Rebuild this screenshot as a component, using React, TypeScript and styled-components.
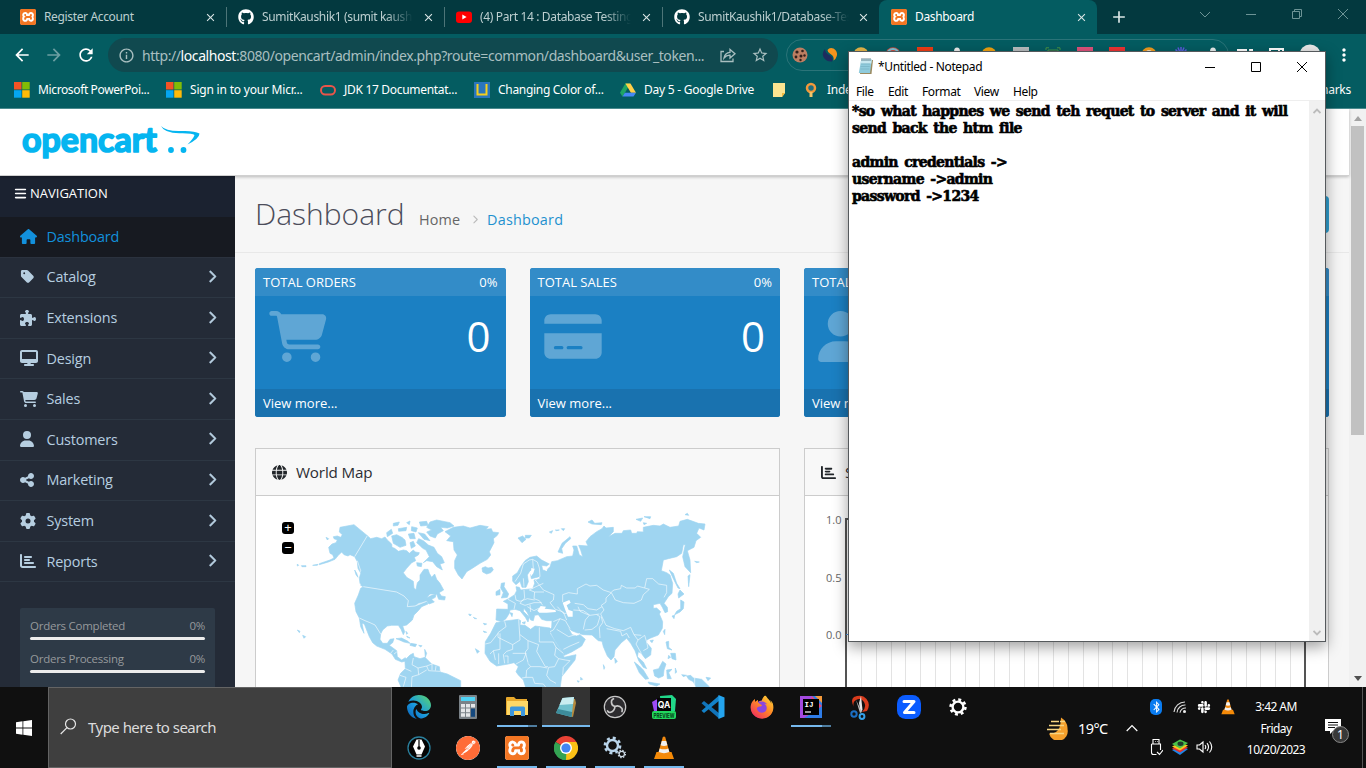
import React from "react";
import styled, { createGlobalStyle } from "styled-components";
import { FaHouse, FaTag, FaPuzzlePiece, FaDesktop, FaCartShopping, FaUser, FaShareNodes, FaGear, FaChartBar, FaChevronRight, FaCreditCard, FaGlobe, FaBars, FaGithub, FaEdge, FaFirefoxBrowser, FaBluetoothB, FaSlack } from "react-icons/fa6";
import { MdArrowBack, MdArrowForward, MdRefresh, MdInfoOutline, MdStarBorder, MdClose, MdAdd, MdMoreVert } from "react-icons/md";
import { SiXampp, SiPostman } from "react-icons/si";

const ui = `"Noto Sans", "Open Sans", sans-serif`;

const Global = createGlobalStyle`
  * { box-sizing: border-box; }
  body { margin: 0; overflow: hidden; font-family: "Open Sans", sans-serif; }
  svg { display: block; flex: none; }
`;

const Desktop = styled.div`
  position: relative; width: 1366px; height: 768px; overflow: hidden;
  display: flex; flex-direction: column; background: #f6f6f6;
`;

/* ---------- browser chrome ---------- */
const TabStrip = styled.div`
  height: 34px; flex: none; display: flex; background: #03393f; font-family: ${ui};
`;
const Tab = styled.div<{ $active?: boolean; $w: number }>`
  width: ${p => p.$w}px; height: 34px; display: flex; align-items: center; flex: none;
  padding: 0 9px 0 ${p => (p.$active ? 12 : 11)}px; gap: 8px; font-size: 12px;
  color: ${p => (p.$active ? "#fff" : "#bccfd0")};
  background: ${p => (p.$active ? "#045c61" : "transparent")};
  border-radius: 8px 8px 0 0;
`;
const TabLabel = styled.div<{ $fade?: boolean }>`
  width: 151px; overflow: hidden; white-space: nowrap; letter-spacing: -0.35px; line-height: 18px;
  ${p => p.$fade && "mask-image: linear-gradient(90deg, #000 82%, transparent);"}
`;
const TabClose = styled(MdClose)`width: 13px; height: 13px; margin-left: auto; color: #dbe6e6;`;
const TabSep = styled.div`width: 1px; height: 20px; margin: 7px 0 0; background: #4d7578; flex: none;`;
const Spacer = styled.span`width: 1px; flex: none;`;
const WindowButtons = styled.div`
  margin-left: auto; display: flex; gap: 30px; padding: 6px 15px 0 0; color: #6d9496;
`;
const NewTab = styled(MdAdd)`width: 20px; height: 20px; color: #dbe6e6; margin: 7px 0 0 12px;`;

const Toolbar = styled.div`
  height: 42px; flex: none; background: #045c61; display: flex; align-items: center; padding-left: 12px; color: #fff;
`;
const NavIcons = styled.div`
  display: flex; gap: 12px; width: 96px;
  svg { width: 20px; height: 20px; }
`;
const Omnibox = styled.div`
  width: 670px; height: 34px; border-radius: 17px; background: #10494f; display: flex; align-items: center;
  padding: 0 9px 0 10px; color: #a9bfc0; font-family: ${ui}; font-size: 14px;
`;
const Url = styled.div`
  margin-left: 7px; width: 577px; white-space: nowrap; letter-spacing: -0.42px;
  b { font-weight: 400; color: #fff; }
`;
const StarIcon = styled(MdStarBorder)`width: 18px; height: 18px; margin-left: auto;`;
const Extensions = styled.div`
  margin-left: 8px; width: 443px; height: 32px; border: 1px solid #2b7479; border-radius: 16px;
  display: flex; align-items: center; padding-left: 5px; gap: 14px;
`;
const ToolIcons = styled.div`
  display: flex; align-items: center; gap: 14px; margin-left: 7px;
`;
const Bookmarks = styled.div`
  height: 33px; flex: none; background: #045c61; border-bottom: 1px solid #4a8a8e; display: flex; align-items: center;
  padding: 0 15px 5px 14px; color: #fff; font-family: ${ui}; font-size: 12px;
`;
const Bookmark = styled.div<{ $w: number; $ls?: number }>`
  width: ${p => p.$w}px; display: flex; align-items: center; gap: 8px; flex: none; white-space: nowrap;
  letter-spacing: ${p => p.$ls ?? -0.25}px;
`;
const OtherBookmarks = styled.div`margin-left: auto; letter-spacing: -0.25px;`;

/* ---------- page ---------- */
const Page = styled.div`height: 578px; flex: none; display: flex; overflow: hidden;`;
const Site = styled.div`width: 1349px; display: flex; flex-direction: column;`;
const SiteHeader = styled.header`
  height: 67px; flex: none; background: #fff; padding: 16px 0 0 20px; z-index: 1;
  border-bottom: 1px solid #d0d0d0; box-shadow: 0 1px 3px rgba(0,0,0,.25);
`;
const SiteBody = styled.div`display: flex; height: 511px;`;
const Sidebar = styled.nav`width: 235px; flex: none; background: #242b37; overflow: hidden;`;
const NavTitle = styled.div`
  height: 41px; padding: 0 0 7px 14px; background: #1b2230; color: #fff; display: flex; align-items: center; gap: 3px;
  font-size: 13px;
`;
const NavRow = styled.div<{ $active?: boolean }>`
  height: 40.62px; display: flex; align-items: center; border-bottom: 1px solid ${p => (p.$active ? "#2b323e" : "#2d3743")};
  padding: 0 18px 1px 20px; font-size: 14.4px; letter-spacing: -0.18px;
  color: ${p => (p.$active ? "#1290dc" : "#b6cee0")}; background: ${p => (p.$active ? "#171a21" : "transparent")};
`;
const NavGlyph = styled.span<{ $narrow: boolean }>`
  width: 26.5px; font-size: 16px; display: flex; margin-left: ${p => (p.$narrow ? -1 : 0)}px; padding-right: 0;
  & + span { margin-left: ${p => (p.$narrow ? 1 : 0)}px; }
`;
const NavArrow = styled(FaChevronRight)`width: 10px; height: 13px; margin: -1px 0 0 auto; stroke: currentColor; stroke-width: 20;`;
const StatBox = styled.div`
  margin: 26px 20px 0; height: 120px; background: #2e3a47; border-radius: 2px; padding: 9px 10px; color: #96999c; font-size: 11.5px; letter-spacing: -0.25px;
`;
const StatRow = styled.div`height: 33px;`;
const StatLabel = styled.div`height: 20px; line-height: 18px; display: flex; justify-content: space-between;`;
const StatBar = styled.div`height: 3px; border-radius: 2px; background: #ececec;`;

const Main = styled.main`width: 1114px; background: #f6f6f6;`;
const TitleBar = styled.div`
  height: 77px; border-bottom: 1px solid #e8e8e8; display: flex; align-items: center; padding: 0 20px 1px;
`;
const Title = styled.h1`margin: 0; font-size: 30px; font-weight: 300; color: #4c4d5a; width: 164px; line-height: 40px;`;
const Crumbs = styled.div`
  display: flex; align-items: center; font-size: 14.4px; letter-spacing: 0.1px; color: #666; padding-top: 12px;
  svg { width: 8px; height: 9px; color: #bbb; margin: 0 8px 0 11px; }
  a { color: #1e91cf; letter-spacing: 0.2px; }
`;
const HelpButton = styled.div`margin: 2px 0 0 auto; width: 40px; height: 37px; border-radius: 4px; background: #2f9fd0;`;
const Tiles = styled.div`display: flex; gap: 24px; padding: 15px 20px 0;`;
const Tile = styled.div`width: 250.5px; height: 149px; border-radius: 3px; overflow: hidden; background: #1b80c3; color: #fff; flex: none;`;
const TileHead = styled.div`
  height: 28px; background: #338cc8; display: flex; justify-content: space-between; align-items: center; padding: 0 8px;
  font-size: 13px;
`;
const TileBody = styled.div<{ $iconWidth: number }>`
  height: 93px; display: flex; justify-content: space-between; padding: 15px 15px 0 14px; font-size: 42px; line-height: 50px;
  svg { width: ${p => p.$iconWidth}px; height: 51px; color: rgba(255,255,255,.3); }
`;
const TileFoot = styled.div`height: 28px; background: #1972af; padding: 0 8px; line-height: 28px; font-size: 13px;`;
const Panels = styled.div`display: flex; gap: 24px; padding: 31px 20px 0;`;
const Panel = styled.section`width: 525px; height: 300px; border: 1px solid #ccc; background: #fff; flex: none; position: relative;`;
const PanelHead = styled.div`
  height: 47px; background: #f8f8f8; border-bottom: 1px solid #ccc; display: flex; align-items: center; padding: 0 16px; gap: 9px;
  font-size: 15.2px; letter-spacing: -0.15px; color: #2c2d33; svg { width: 15px; height: 15px; color: #212529; }
`;
const MapControls = styled.div`position: absolute; left: 26px; top: 73px; display: grid; gap: 8px;`;
const MapButton = styled.div`
  width: 12px; height: 12px; border-radius: 3px; background: #000; color: #fff; font: 13px/11px ${ui}; text-align: center;
`;
const Scrollbar = styled.div`width: 17px; background: #f1f1f1; display: flex; flex-direction: column; align-items: center; padding: 6px 0;`;
const Thumb = styled.div`width: 13px; height: 309px; background: #c1c1c1; margin-top: 5px;`;
const ArrowUp = styled.div`border: 4px solid transparent; border-top: 0; border-bottom: 5px solid #a3a3a3; margin-top: 1px;`;
const ArrowDown = styled.div`border: 4px solid transparent; border-bottom: 0; border-top: 5px solid #505050; margin-top: auto;`;

/* ---------- notepad ---------- */
const Notepad = styled.div`
  position: absolute; z-index: 5; left: 848px; top: 51px; width: 478px; height: 591px; background: #fff; border: 1px solid #55595c;
  box-shadow: 0 5px 14px rgba(0,0,0,.38); display: flex; flex-direction: column; font-family: ${ui}; color: #000;
`;
const NoteTitle = styled.div`height: 29px; flex: none; display: flex; align-items: center; font-size: 12px; letter-spacing: -0.35px; padding: 0 17px 0 9px;`;
const NoteName = styled.span`margin-left: 4px;`;
const NoteButtons = styled.div`margin-left: auto; display: flex; gap: 34px;`;
const NoteMenu = styled.div`
  height: 20px; flex: none; display: flex; align-items: center; padding: 2px 0 0 7px; font-size: 12px; letter-spacing: -0.38px; border-bottom: 1px solid #eee;
`;
const MenuItem = styled.span<{ $w: number }>`width: ${p => p.$w}px;`;
const NoteBody = styled.div`display: flex; flex: 1;`;
const NoteText = styled.pre`
  margin: 0; padding: 2px 0 0 3px; width: 460px; font: bold 14px/17px "DejaVu Serif", serif; letter-spacing: -0.68px; word-spacing: 2.2px;
  -webkit-text-stroke: 0.6px #000;
`;
const NoteScroll = styled.div`width: 16px; background: #f0f0f0; display: flex; flex-direction: column; justify-content: space-between; align-items: center; padding: 7px 0 5px;`;

/* ---------- taskbar ---------- */
const Taskbar = styled.div`height: 81px; flex: none; background: #101010; display: flex; color: #fff; font-family: ${ui};`;
const Start = styled.div`width: 48px; display: grid; place-items: center;`;
const Search = styled.div`
  width: 344px; border: 1px solid #646464; background: #3f3f3f; display: flex; align-items: center; gap: 11px; padding: 0 0 2px 11px;
  color: #dcdcdc; font-size: 15px; letter-spacing: -0.53px;
`;
const Apps = styled.div`display: grid; grid-template-columns: repeat(12, 49px); grid-template-rows: 40px 41px; margin-left: 3px; width: 645px;`;
const TaskApp = styled.div<{ $state?: string }>`
  width: 48px; display: flex; align-items: center; justify-content: center; position: relative;
  background: ${p => (p.$state === "focus" ? "#333" : "transparent")};
  &::after {
    content: ""; position: absolute; bottom: 0; height: 2px; left: ${p => (p.$state === "focus" ? 0 : 4)}px; right: ${p => (p.$state === "focus" ? 0 : 4)}px;
    background: ${p => (!p.$state ? "none" : p.$state === "multi" ? "linear-gradient(90deg,#76b9ed 78%,#4f7d9f 78%)" : "#76b9ed")};
  }
`;
const Weather = styled.div`display: flex; align-items: center; gap: 8px; width: 80px; margin-left: 6px; font-size: 14.5px; letter-spacing: -0.6px;`;
const Chevron = styled.div`display: flex; align-items: center; width: 18px;`;
const Tray = styled.div`
  display: grid; grid-template-columns: repeat(4, 24px); grid-template-rows: 40px 40px; place-items: center;
`;
const Clock = styled.div`width: 72px; text-align: center; font-size: 12px; line-height: 21.5px; letter-spacing: -0.55px; padding-top: 9px;`;
const Notice = styled.div`position: relative; margin: 32px 0 0 13px; width: 37px;`;
const Badge = styled.div`
  position: absolute; left: 7px; top: 7px; width: 17px; height: 17px; border-radius: 50%; background: #383838; border: 1px solid #888;
  font-size: 12px; line-height: 15px; text-align: center;
`;
const ShowDesktop = styled.div`width: 1px; background: #555;`;

const XamppBox = styled.span<{ $s: number }>`
  width: ${p => p.$s}px; height: ${p => p.$s}px; background: #fff; border-radius: 3px; color: #f37623; display: block; flex: none;
  svg { width: 100%; height: 100%; }
`;
const Xampp = ({ s = 16 }: { s?: number }) => <XamppBox $s={s}><SiXampp /></XamppBox>;

const GithubMark = styled(FaGithub)`width: 16px; height: 16px; color: #fff;`;

const YouTube = () => (
  <svg width="16" height="16" viewBox="0 0 16 16"><rect y="2.5" width="16" height="11.5" rx="3" fill="#f00" /><path d="M6.3 5.6v5l4.3-2.5z" fill="#fff" /></svg>
);
const Microsoft = () => (
  <svg width="16" height="16" viewBox="0 0 16 16"><path d="M0 0h7.5v7.5H0z" fill="#f35325" /><path d="M8.2 0h7.5v7.5H8.2z" fill="#81bc06" /><path d="M0 8.2h7.5v7.5H0z" fill="#05a6f0" /><path d="M8.2 8.2h7.5v7.5H8.2z" fill="#ffba08" /></svg>
);
const Drive = () => (
  <svg width="16" height="16" viewBox="0 0 17 16"><path d="M5.7 1h5.2L5 11.5 2.6 15 0 10.8z" fill="#1fa463" /><path d="M5.7 1h5.4L17 10.8h-5.4z" fill="#ffcf48" /><path d="M5.2 10.8H17L14.3 15H2.6z" fill="#4688f4" /></svg>
);
const NotepadIcon = () => (
  <svg width="16" height="17" viewBox="0 0 16 17"><path d="M4 2h11l-1.500 14H2z" fill="#9b8a60" /><path d="M3.200 1.500h10.600L12 15H.8z" fill="#8fcbdc" /><path d="M3.200 1.500h10.600l-.5 4H2.600z" fill="#c7e8f0" /><path d="M3 6h9M2.700 8.500h9M2.400 11h9" stroke="#72aec0" strokeWidth=".6" /><path d="M4 0v3M6 0v3M8 0v3M10 0v3M12 0v3" stroke="#4c6d78" strokeWidth=".8" /></svg>
);
const Vlc = ({ s }: { s: number }) => (
  <svg width={s} height={s} viewBox="0 0 24 24"><path d="M4.500 16h15l2.500 7H2z" fill="#f58a07" /><path d="M10.800 1q1.200-1 2.400 0L18 18q-6 3.500-12 0z" fill="#f28a10" /><path d="M9.800 5h4.400l1.200 4.300q-3.400 1.300-6.800 0zM7.700 12.500q4.300 1.700 8.600 0l1 3.500q-5.300 2.300-10.600 0z" fill="#f1f1f1" /></svg>
);

const Logo = () => (
  <svg width="184" height="44" viewBox="20 125 184 44">
    <text x="22" y="152.300" fontFamily="Lato" fontWeight="700" fontSize="34" textLength="135" lengthAdjust="spacingAndGlyphs" fill="#05b5f0" stroke="#05b5f0" strokeWidth="1.700" strokeLinejoin="round" strokeLinecap="round">opencart</text>
    <path d="M161 126q5 5.500 20 5q13-.6 18.500 2.500q0 5-12 11q6-6 7-9.500q-2-2-14-1.800q-16 .3-19.500-7.200z" fill="#05b5f0" />
    <circle cx="171" cy="150" r="2.900" fill="#05b5f0" /><circle cx="183.500" cy="150" r="2.900" fill="#05b5f0" />
  </svg>
);

const NORTH_AMERICA = [
  "M270 262L312 254 352 287 314 350 300 344 294 348 282 344 275 336 265 346 255 358 235 366 208 374 208 371 240 360 252 354 248 344 240 340 236 322 246 312 258 308 262 300 252 296 250 290 262 288 272 292 277 284 268 276Z",
  "M352 287L362 296 380 292 395 296 405 291 412 300 425 312 426 322 434 325 445 334 460 330 470 332 478 340 490 330 496 336 508 338 505 345 493 352 497 362 485 368 470 385 460 398 470 412 490 424 492 445 498 449 502 428 510 420 510 405 522 388 534 388 538 400 545 412 554 402 560 418 570 430 581 450 560 462 540 462 530 474 545 466 558 462 556 472 545 478 553 486 537 492 530 483 505 490 495 498 472 502 475 482 462 468 440 456 340 440 330 430 328 415 332 400 324 385 322 365 314 350Z",
  "M340 440L440 456 462 468 475 482 472 500 495 498 530 484 534 492 515 500 505 512 492 525 487 540 470 555 458 558 464 575 460 584 453 568 445 556 425 556 412 558 398 570 392 582 375 555 360 548 345 542 328 534 318 515 314 490 325 465 332 445Z",
  "M328 534L345 542 360 548 375 555 392 582 390 598 398 610 412 610 420 598 432 596 428 608 418 616 440 632 442 650 455 660 466 653 472 662 455 666 436 658 426 642 405 628 380 618 368 608 358 590 352 575 343 552 336 550 342 580 332 560Z",
  "M470 655L480 645 490 640 492 650 510 656 525 652 545 672 568 680 570 696 592 702 632 722 632 745 455 745 444 720 452 700 466 686 465 665Z",
  "M425 288L440 284 455 292 465 300 468 316 450 322 430 310Z",
  "M506 296L520 302 535 315 552 322 562 340 575 350 583 368 570 372 577 390 560 380 548 365 530 362 520 368 538 350 528 330 518 325 508 315 500 308Z",
  "M540 246L560 240 600 248 612 258 592 264 572 262 580 272 562 282 556 294 540 288 530 276 545 270 530 262Z",
  "M430 250L448 246 444 256 430 258ZM470 248L480 243 478 254ZM445 266L470 262 468 272 446 274ZM485 260L502 264 498 276 484 272ZM508 246L530 244 534 256 512 258ZM475 282L492 280 496 296 480 296ZM505 278L524 282 540 302 522 298ZM410 278L424 268 428 280 412 290ZM480 308L490 304 496 318 484 325ZM500 368L516 370 514 380 502 378Z",
  "M438 596L455 594 474 604 480 610 462 606 448 600ZM482 610L500 613 496 620 480 616ZM506 616L516 617 512 621ZM560 462L566 456 574 468 586 470 584 480 566 478ZM336 428L340 440 332 436ZM314 390L320 400 324 412 318 404ZM142 570L150 574 148 578ZM158 586L167 590 162 595ZM142 372L146 376 142 378ZM154 377L168 377 168 380 156 380ZM188 376L204 373 202 376ZM228 292L236 296 232 300ZM468 574L473 580 470 583ZM470 588L480 594 472 592ZM524 628L530 640 526 652Z",
  "M585 275L610 262 640 258 660 264 690 256 715 260 708 268 724 266 728 276 746 278 742 286 730 296 732 308 718 335 722 345 712 358 690 370 665 386 650 395 636 417 625 405 614 385 614 362 622 345 612 330 610 305 590 302 602 288Z",
  "M696 384L706 380 714 384 726 382 730 390 722 398 710 402 698 396Z",
  "M656 522L664 524 660 528ZM670 532L680 536 674 536ZM700 550L710 552 704 555ZM700 573L710 577 702 577ZM676 626L688 634 682 640Z",
];

const EURASIA = [
  "M38 408L52 398 62 380 75 362 90 352 110 348 125 360 148 372 140 378 125 376 128 390 138 392 150 380 155 365 172 362 200 350 218 348 222 330 218 318 230 318 238 345 248 350 242 330 236 316 264 318 258 305 270 290 290 275 306 266 312 258 318 264 340 262 340 275 325 290 345 280 366 280 370 272 392 270 395 280 410 280 412 275 430 276 430 262 460 256 480 258 490 252 510 262 536 258 540 244 562 238 595 250 615 252 612 270 597 264 590 280 602 292 588 302 582 322 562 332 570 360 572 398 555 380 548 350 556 314 550 314 545 340 530 350 505 356 490 360 484 392 500 398 510 405 518 430 516 460 505 470 492 490 502 502 503 515 495 518 487 502 480 490 460 494 460 505 470 504 482 515 478 522 488 545 487 565 475 585 452 594 440 600 440 608 454 625 452 645 436 656 424 640 415 635 412 650 430 666 440 686 430 682 416 662 405 632 392 610 380 595 364 608 345 630 342 650 333 660 322 648 310 620 306 604 295 602 288 596 276 585 250 584 235 580 215 572 204 562 216 584 230 588 240 584 256 598 245 618 215 636 193 646 185 632 165 602 148 570 155 562 156 542 140 542 125 538 115 524 104 526 100 542 92 540 82 518 72 505 70 514 88 532 84 546 76 532 60 512 45 508 30 510 28 520 18 536 5 545 -12 540 -10 507 24 508 24 492 10 484 26 476 44 464 50 452 48 440 58 442 62 450 98 446 104 430 102 420 120 416 118 410 94 416 92 405 102 388 90 392 82 405 85 425 78 442 66 442 60 424 48 434 38 424Z",
  "M-12 548L15 543 55 538 62 542 60 555 75 556 92 568 105 558 150 564 150 580 170 612 190 640 192 652 228 644 225 660 205 685 185 710 180 745 78 745 70 720 55 705 48 695 55 680 42 668 25 672 -10 678 -30 664 -45 640 -44 605 -28 580Z",
  "M4 430L14 428 12 440 26 462 22 472 4 474 10 458 2 444ZM-12 455L0 448 0 464 -12 466Z",
  "M54 294L68 288 78 298 66 308ZM76 286L94 286 88 294 76 294ZM148 276L158 272 154 280ZM166 270L178 270 170 272ZM184 266L194 266 190 272ZM174 336L186 310 210 290 212 296 196 310 185 326 188 340ZM264 246L276 240 284 250 306 248 304 254 276 252ZM408 238L428 234 422 244ZM432 230L452 230 450 236ZM430 248L440 250 432 254ZM555 224L562 220 566 226ZM584 364L598 366 590 368Z",
  "M508 390L520 400 530 430 540 446 534 444 520 416ZM534 462L540 450 552 462 536 474ZM542 480L552 486 550 506 540 516 524 524 530 514 542 506ZM516 528L524 526 522 536ZM564 408L570 404 566 440ZM490 574L495 568 494 584ZM450 602L460 600 456 608ZM344 654L352 664 346 670Z",
  "M498 606L506 604 506 622 516 630 502 626ZM512 640L526 640 528 660 516 656ZM506 646L512 652 504 656ZM403 666L418 678 430 690 446 716 436 718 418 698ZM460 690L476 686 488 664 498 672 492 690 490 708 476 714 464 708ZM500 690L516 688 506 698 514 716 502 716ZM444 726L480 732 470 738 448 732ZM526 684L530 696 526 700ZM545 704L560 706 550 710ZM560 708L572 706 580 714 605 718 628 740 590 745 580 725 566 718ZM618 712L632 714 624 722ZM310 674L314 682 312 688ZM242 712L248 718 242 720ZM232 722L238 724 234 727ZM12 512L20 514 14 520ZM66 548L76 545 74 552ZM110 566L120 563 118 568ZM30 518L38 520 36 530Z",
];
const SEAS = [
  "M112 512L122 498 138 500 134 506 150 508 166 510 168 516 140 518 118 518Z",
  "M188 488L208 480 212 488 200 496 206 510 218 514 218 530 204 530 196 510Z",
  "M94 384L104 386 100 400 92 410ZM134 390L142 388 140 394Z",
];
const BORDERS = [
  "M45 425L62 400 70 372 88 360 98 358 100 385M72 440L70 415M98 358L112 366 118 384 120 410 106 420 130 450 162 464 160 480 150 488 166 508 190 516 200 540 M130 430L108 440 88 450 104 456 132 456M45 464L48 480 60 484 82 476 104 480M72 450L74 474 60 490 75 496 102 488 125 488M104 456L102 476 118 482 128 496M24 478L46 490 42 508M82 500L102 512 118 504M90 494L92 516",
  "M188 486L188 464 206 458 232 462 232 446 258 432 270 438 290 436 310 450 334 458M334 456L342 450 362 446 364 436 380 444 406 444 412 438 434 444 440 416 458 416 476 432 500 436 500 458 492 472M334 458L346 480 370 488 402 490 424 480 430 464 448 448 434 444M334 458L318 474 318 486 304 496 312 510 302 522 318 556 344 566 370 572 392 562 402 584 M224 490L250 494 264 506 290 510 306 500 M220 510L250 512 270 526 298 522M234 500L240 514 268 526 256 540 250 568M290 524L300 530 292 556 276 568 254 570M304 530L308 548 298 562 300 594M160 545L180 536 196 542 210 566M180 536L160 570 150 575M170 568L206 590 240 580M190 628L210 618 238 606M320 566L362 574 366 588 380 580 388 594M402 584L414 600 408 612 424 640M414 600L434 586 440 606 444 624 430 632M402 584L424 586M172 500L190 520 200 520",
  "M14 544L18 560 -6 578 -6 592 38 614 60 600 56 538M60 584L84 602 84 626 76 636 84 668M118 562L118 606 160 606M84 602L116 614 110 634 120 652 136 680 144 680M38 614L38 628 20 634 10 644 14 670M0 580L0 628 -20 632 -30 642M-44 612L-28 608 -6 580M38 640L78 640 70 660 48 672M14 648L24 648 24 670M-4 640L-4 672M-20 632L-14 660M160 606L168 622 164 646 176 656 164 680 146 682 140 706 150 720M176 656L196 660 210 662 190 682 188 706M84 670L92 680 80 690 78 712 66 714M92 680L120 680 142 684 M168 622L190 640M78 712L98 712 104 730 130 732 140 745M150 720L168 730M584 712V745",
];
const AMERICA_BORDERS = "M322 362L332 392 328 400M490 654L486 674 504 684 506 704 486 710 484 745M466 686L484 694M450 706L468 712 460 740M504 684L530 678 546 672M530 678L536 692 570 694M546 672L546 690M558 678L556 692M506 704L530 690M430 630L422 640M440 636L432 642";

const WorldMap = () => (
  <svg width="523" height="191" viewBox="18 168 1569 573">
    <g fill="#9fd5f1" stroke="#9fd5f1" strokeWidth="2" strokeLinejoin="round">
      {NORTH_AMERICA.map(d => <path key={d} d={d} />)}
      <g transform="translate(750 0)">{EURASIA.map(d => <path key={d} d={d} />)}</g>
    </g>
    <g fill="#fff" transform="translate(750 0)">{SEAS.map(d => <path key={d} d={d} />)}</g>
    <g fill="none" stroke="#fff" strokeOpacity=".8" strokeWidth="2.200" strokeLinejoin="round">
      <path d="M352 287L314 350M340 440L440 456 462 468 475 482 472 500 495 498 530 484M328 534L345 542 360 548 375 555 392 582" />
      <path d={AMERICA_BORDERS} />
      <g transform="translate(750 0)">{BORDERS.map(d => <path key={d} d={d} />)}</g>
    </g>
  </svg>
);

const SalesChart = () => (
  <svg width="523" height="191" viewBox="805 496 523 191" fontFamily="Open Sans" fontSize="11" fill="#666">
    <g stroke="#e3e3e3">{Array.from({ length: 30 }, (_, i) => <path key={i} d={`M${Math.round(861 + i * 14.79) + 0.5} 520V690`} />)}</g>
    <path d="M846 690V519H1305V690" stroke="#545454" strokeWidth="2" fill="none" />
    <path d="M846 634.500H1305" stroke="#4a8fd6" />
    <text x="826" y="524">1.0</text><text x="826" y="582">0.5</text><text x="826" y="639">0.0</text>
  </svg>
);

const nav: [React.ReactNode, string, boolean?][] = [
  [<FaHouse size={17} />, "Dashboard"], [<FaTag size={15} />, "Catalog"], [<FaPuzzlePiece />, "Extensions"], [<FaDesktop size={18} />, "Design"],
  [<FaCartShopping size={18} />, "Sales"], [<FaUser size={16} />, "Customers", true], [<FaShareNodes size={16} />, "Marketing", true], [<FaGear />, "System"], [<FaChartBar />, "Reports"],
];
const tiles: [string, React.ReactNode, number][] = [
  ["TOTAL ORDERS", <FaCartShopping />, 58], ["TOTAL SALES", <FaCreditCard />, 58], ["TOTAL CUSTOMERS", <FaUser />, 45], ["PEOPLE ONLINE", <FaUser />, 45],
];
const extColors = ["#e8b84a", "#d24a3c", "#f03c14", "#eee", "#f2a30f", "#b9bec0", "#3a4a3a", "#e0527c", "#e33", "#f29b1d", "#5b5be0", "#e9eeee"];

const Cookie = () => (
  <svg width="16" height="16" viewBox="0 0 16 16"><circle cx="8" cy="8" r="7.500" fill="#bd7e62" /><g fill="#33211c"><circle cx="5" cy="5" r="1.600" /><circle cx="10.500" cy="4" r="1.300" /><circle cx="4" cy="10" r="1.400" /><circle cx="9" cy="9" r="1.500" /><circle cx="12.500" cy="8.500" r="1.200" /><circle cx="8.500" cy="13" r="1.200" /></g></svg>
);
const Swirl = () => (
  <svg width="16" height="16" viewBox="0 0 16 16"><path d="M3 2Q-1 6 2 11q3 4 8 3.500Q12 11 8 8.500 3 6 3 2z" fill="#1d2c5e" /><path d="M5.500 3q2-3 6-1.500Q16 4 14.800 9q-.8 3-3.300 4.500Q12.500 9 8.500 7 5.500 5.500 5.500 3z" fill="#f7941d" /></svg>
);
const ExtDot = ({ c, i }: { c: string; i: number }) => (
  <svg width="18" height="16" viewBox="0 0 18 16">
    {[2, 5, 7, 8].includes(i) ? <rect x="1" y="0" width="16" height="15" fill={c} />
      : i === 3 || i === 11 ? <path d="M2 4.500h4Q6 .5 9 .5t3 4h4v10H2z" fill={c} />
      : i === 6 ? <path d="M2 3V.8h3M13 .8h3V3M4 3h10v10H4z" fill="#28424a" stroke="#3f9a4a" strokeWidth="1" />
      : i === 10 ? <path d="M9 0v16M1 8h16M3.500 2.500l11 11M14.500 2.500l-11 11M6 .5l6 15M12 .5l-6 15" stroke={c} strokeWidth="1.500" />
      : <circle cx="9" cy="8" r={i === 9 ? 6.300 : 7.700} fill={i === 9 ? "#fff" : c} stroke={c} strokeWidth={i === 9 ? 3 : 0} />}
    {i === 1 && <path d="M3 8a6 6 0 0 1 12 0" fill="none" stroke="#7fc4d8" strokeWidth="2" />}
    {(i === 7 || i === 8) && <path d="M3 4.500h12v3H3z" fill={i === 7 ? "#333" : "#fff"} />}
  </svg>
);

const Chrome = () => (
  <svg width="24" height="24" viewBox="0 0 24 24"><path d="M12 12L1.600 6A12 12 0 0 1 22.400 6z" fill="#e94235" /><path d="M12 12L22.400 6A12 12 0 0 1 12 24z" fill="#fbc116" /><path d="M12 12v12A12 12 0 0 1 1.600 6z" fill="#34a353" /><path d="M12 6h10.400l-4.500 9L12 24l5.300-9z" fill="#fbc116" /><path d="M1.600 6L7 15l5.300 3L12 24A12 12 0 0 1 1.600 6z" fill="#34a353" /><circle cx="12" cy="12" r="6" fill="#fff" /><circle cx="12" cy="12" r="4.600" fill="#4285f4" /></svg>
);
const EdgeIcon = styled(FaEdge)`width: 24px; height: 24px; && { fill: url(#edge); }`;
const FirefoxIcon = styled(FaFirefoxBrowser)`width: 24px; height: 24px; border-radius: 50%; background: radial-gradient(circle at 50% 50%, #8a45e0 0 6px, transparent 7px); && { fill: url(#fox); }`;
const Gradients = styled.svg`position: absolute; width: 0; height: 0;`;
const Calculator = () => (
  <svg width="18" height="24" viewBox="0 0 18 24"><rect width="18" height="24" rx="1" fill="#7a8288" /><rect x="2" y="2" width="14" height="4" fill="#4fd3f5" /><g fill="#e4e6e8"><path d="M2 9h4v3.600H2zM7 9h4v3.600H7zM2 13.600h4v3.600H2zM7 13.600h4v3.600H7zM2 18.200h4v3.600H2zM7 18.200h4v3.600H7zM12 9h4v3.600h-4z" /></g><path d="M12 13.600h4v8.200h-4z" fill="#14487e" /></svg>
);
const Explorer = () => (
  <svg width="22" height="20" viewBox="0 0 22 20"><path d="M0 1q0-1 1-1h7l2 2h11v16H0z" fill="#e8a92c" /><path d="M1 4h21v14H1z" fill="#fdd868" /><path d="M4 11q0-1.500 1.500-1.500h12Q19 9.500 19 11v8h-4v-5H8v5H4z" fill="#3c96dc" /></svg>
);
const Notes = () => (
  <svg width="24" height="24" viewBox="0 0 24 24"><path d="M12 3l9 1 1 4-3 14-4-1z" fill="#b68b3e" /><path d="M8.500 3L20 2l-2.500 20L2 18z" fill="#6fc0cc" /><path d="M8.500 3L20 2l-1 7-13.500 1z" fill="#c9edf0" /><path d="M2 18l15.500 4 .6-5-14.300-3z" fill="#3d8c9b" /></svg>
);
const Obs = () => (
  <svg width="24" height="24" viewBox="0 0 24 24"><circle cx="12" cy="12" r="10.700" fill="#2c2b2e" stroke="#c8c8c8" strokeWidth="1.200" /><path d="M10.500 3.800Q9 4.500 8.500 6 8 10.500 12 11.500 16 9.800 19 13.500 19.600 15 19 16.500M12 11.500Q11.500 16.500 7 17.500 5.500 17.500 4.500 16" fill="none" stroke="#c8c8c8" strokeWidth="1.700" strokeLinecap="round" /></svg>
);
const QaIcon = () => (
  <svg width="26" height="26" viewBox="0 0 26 26"><path d="M1 8l7-4 8 13H3z" fill="#9d4cf5" /><path d="M9 2l12-1 4 4-1 12H10z" fill="#21d789" /><rect x="6" y="4" width="14" height="13" fill="#050505" /><rect x="1" y="17" width="24" height="8" rx="2" fill="#21d75e" /><text x="13" y="13.500" textAnchor="middle" fontFamily="Inter" fontWeight="700" fontSize="8.500" fill="#fff">QA</text><text x="13" y="23.500" textAnchor="middle" fontFamily="Inter" fontWeight="700" fontSize="5.500" textLength="21" lengthAdjust="spacingAndGlyphs" fill="#063b18">PREVIEW</text></svg>
);
const VsCode = () => (
  <svg width="24" height="24" viewBox="0 0 24 24"><path d="M.5 8.200L3 6 18.500 18.500 18 23.500z" fill="#1173b8" /><path d="M.5 15.800L3 18 18.500 5.500 18 .5z" fill="#1382c9" /><path d="M17.500 0L23.500 2.500V21.500L17.500 24z" fill="#24a4ee" /></svg>
);
const IdeaIcon = () => (
  <svg width="22" height="22" viewBox="0 0 22 22"><path d="M0 0h22v12L12 22H0z" fill="#e8487c" /><path d="M0 0h12L6 22H0z" fill="#a44ae0" /><path d="M12 0h10v22H4L22 10z" fill="#2f7de8" /><path d="M15 0h7v7z" fill="#f59a3a" /><rect x="3" y="3" width="16" height="16" fill="#000" /><text x="4.500" y="10.500" fontFamily="Liberation Mono" fontWeight="700" fontSize="7.500" fill="#fff">IJ</text><path d="M5 16h6" stroke="#fff" strokeWidth="1.200" /></svg>
);
const Snip = () => (
  <svg width="20" height="25" viewBox="0 0 20 25"><path d="M4 2q8-3.500 12.500 2T17 16l-5 1q5-5 2-10T6 5q-4 2-2 7Q0 5 4 2z" fill="#d83b1c" /><path d="M11 1l1.500 14-2 2L9 8z" fill="#e6e6e6" /><path d="M6 5l6 12-2 1z" fill="#bbb" /><circle cx="4" cy="19" r="2.700" fill="none" stroke="#1b6fc4" strokeWidth="2" /><circle cx="12" cy="21.500" r="2.400" fill="none" stroke="#35a0e8" strokeWidth="2" /></svg>
);
const ZoomIcon = () => (
  <svg width="24" height="24" viewBox="0 0 24 24"><rect width="24" height="24" rx="8.500" fill="#0b5cff" /><path d="M7 6.500h10L7.500 17.500H17" fill="none" stroke="#fff" strokeWidth="3" strokeLinejoin="round" strokeLinecap="round" /></svg>
);
const Cog = ({ s, c, x = 12, y = 12 }: { s: number; c: string; x?: number; y?: number }) => (
  <g transform={`translate(${x} ${y}) scale(${s})`} stroke={c} fill="none"><circle r="5.500" strokeWidth="2.400" /><circle r="7.600" strokeWidth="2.600" strokeDasharray="3 2.970" /></g>
);
const PenIcon = () => (
  <svg width="24" height="24" viewBox="0 0 24 24"><circle cx="12" cy="12" r="11" fill="#050505" stroke="#2a7f9c" strokeWidth="1.300" /><path d="M9.500 3.500h5l3.500 7-3.500 8h-5L6 10.500z" fill="#fff" /><path d="M12 4v7" stroke="#000" strokeWidth="1.200" /><circle cx="12" cy="12" r="1.800" fill="#000" /><path d="M9.500 20h5" stroke="#fff" strokeWidth="1.500" /></svg>
);
const PostmanIcon = styled(SiPostman)`width: 24px; height: 24px; color: #ff6c37; background: #fff; border-radius: 50%;`;
const BluetoothTile = styled.span`width: 12px; height: 16px; border-radius: 5px; background: #0a7cf0; display: grid; place-items: center; svg { width: 9px; height: 12px; }`;

const apps: [React.ReactNode, string?][] = [
  [<EdgeIcon />], [<Calculator />], [<Explorer />, "multi"], [<Notes />, "focus"], [<Obs />], [<QaIcon />], [<VsCode />], [<FirefoxIcon />], [<IdeaIcon />, "multi"], [<Snip />], [<ZoomIcon />],
  [<svg width="24" height="24" viewBox="0 0 24 24"><Cog s={0.98} c="#fff" /></svg>],
  [<PenIcon />], [<PostmanIcon />], [<Xampp s={24} />, "open"], [<Chrome />, "open"],
  [<svg width="24" height="24" viewBox="0 0 24 24"><Cog s={1} c="#b9d4ea" x={9.5} y={9.500} /><Cog s={0.480} c="#cfdce8" x={18.800} y={18} /></svg>, "open"],
  [<Vlc s={24} />, "open"],
];

export default function App() {
  return (
    <Desktop>
      <Global />
      <Gradients>
        <linearGradient id="edge" x1="0" y1="1" x2="1" y2="0"><stop offset="0" stopColor="#0b5fb5" /><stop offset=".45" stopColor="#1a9be0" /><stop offset="1" stopColor="#5ed866" /></linearGradient>
        <linearGradient id="fox" x1="1" y1="0" x2=".2" y2="1"><stop offset="0" stopColor="#ffe23d" /><stop offset=".5" stopColor="#ff8a25" /><stop offset="1" stopColor="#f02b62" /></linearGradient>
      </Gradients>

      <TabStrip>
        <Tab $w={226}><Spacer /><Xampp /><TabLabel>Register Account</TabLabel><TabClose /></Tab>
        <TabSep />
        <Tab $w={217}><GithubMark /><TabLabel $fade>SumitKaushik1 (sumit kaushik)</TabLabel><TabClose /></Tab>
        <TabSep />
        <Tab $w={217}><YouTube /><TabLabel $fade>(4) Part 14 : Database Testing</TabLabel><TabClose /></Tab>
        <TabSep />
        <Tab $w={216}><GithubMark /><TabLabel $fade>SumitKaushik1/Database-Testing</TabLabel><TabClose /></Tab>
        <Tab $w={218} $active><Xampp /><TabLabel>Dashboard</TabLabel><TabClose /></Tab>
        <NewTab />
        <WindowButtons>
          <svg width="16" height="16" fill="none" stroke="currentColor"><path d="M3 6l5 5 5-5" /></svg>
          <svg width="16" height="16" fill="none" stroke="currentColor"><path d="M3 8.500h10" /></svg>
          <svg width="16" height="16" fill="none" stroke="currentColor"><path d="M3.500 5.500h7v7h-7zM5.500 5.500v-2h7v7h-2" /></svg>
          <svg width="16" height="16" fill="none" stroke="currentColor"><path d="M3 3l10 10M13 3L3 13" /></svg>
        </WindowButtons>
      </TabStrip>

      <Toolbar>
        <NavIcons><MdArrowBack /><MdArrowForward color="#6c9fa2" /><MdRefresh /></NavIcons>
        <Omnibox>
          <MdInfoOutline size={17} />
          <Url>http://<b>localhost</b>:8080/opencart/admin/index.php?route=common/dashboard&amp;user_token...</Url>
          <svg width="18" height="18" viewBox="0 0 18 18" fill="none" stroke="currentColor" strokeWidth="1.300"><path d="M5 5.500H2v10h12v-3M11 3.500v2.800Q6 6.500 5 12q2.500-3 6-2.800V12l5-4.300z" /></svg>
          <StarIcon />
        </Omnibox>
        <Extensions>
          <Cookie /><Swirl />
          {extColors.map((c, i) => <ExtDot key={c} c={c} i={i} />)}
        </Extensions>
        <ToolIcons>
          <svg width="18" height="18" fill="none" stroke="#fff" strokeWidth="1.800"><path d="M1 4h10M1 8h10M14 12V4h3" /></svg>
          <svg width="18" height="18" fill="none" stroke="#fff" strokeWidth="2"><path d="M2 3h13v12H2zM11 3v12" /></svg>
          <svg width="20" height="22" viewBox="0 0 20 22"><circle cx="10" cy="11" r="10.500" fill="#e9e9e9" /></svg>
          <MdMoreVert size={20} />
        </ToolIcons>
      </Toolbar>

      <Bookmarks>
        <Bookmark $w={152} $ls={-0.37}><Microsoft />Microsoft PowerPoi...</Bookmark>
        <Bookmark $w={154} $ls={-0.2}><Microsoft />Sign in to your Micr...</Bookmark>
        <Bookmark $w={154} $ls={-0.3}><svg width="16" height="16"><rect x="1" y="4" width="14" height="8.500" rx="4.200" fill="none" stroke="#e8554a" strokeWidth="2" /></svg>JDK 17 Documentat...</Bookmark>
        <Bookmark $w={146} $ls={-0.3}><svg width="16" height="16"><rect width="16" height="16" fill="#2a76bd" /><path d="M3.500 2v10.500h9V2" fill="none" stroke="#f6cf1c" strokeWidth="2" /></svg>Changing Color of...</Bookmark>
        <Bookmark $w={152}><Drive />Day 5 - Google Drive</Bookmark>
        <Bookmark $w={31}><svg width="14" height="16"><path d="M1 1h12v10l-3 4H1z" fill="#fbe390" /><path d="M13 11l-3 4v-4z" fill="#f1b73c" /></svg></Bookmark>
        <Bookmark $w={55}><svg width="16" height="16"><circle cx="8" cy="6" r="4" fill="#1f6f80" stroke="#f2993a" strokeWidth="2.500" /><path d="M6.500 10h3v5h-3z" fill="#f5c469" /></svg>Index</Bookmark>
        <OtherBookmarks>Other bookmarks</OtherBookmarks>
      </Bookmarks>

      <Page>
        <Site>
          <SiteHeader><Logo /></SiteHeader>
          <SiteBody>
            <Sidebar>
              <NavTitle><FaBars size={13} />NAVIGATION</NavTitle>
              {nav.map(([icon, label, narrow], i) => (
                <NavRow key={label} $active={i === 0}><NavGlyph $narrow={!!narrow}>{icon}</NavGlyph><span>{label}</span>{i > 0 && <NavArrow />}</NavRow>
              ))}
              <StatBox>
                {["Orders Completed", "Orders Processing", "Other Statuses"].map(s => (
                  <StatRow key={s}><StatLabel><span>{s}</span><span>0%</span></StatLabel><StatBar /></StatRow>
                ))}
              </StatBox>
            </Sidebar>
            <Main>
              <TitleBar>
                <Title>Dashboard</Title>
                <Crumbs>Home<FaChevronRight /><a>Dashboard</a></Crumbs>
                <HelpButton />
              </TitleBar>
              <Tiles>
                {tiles.map(([name, icon, iconWidth]) => (
                  <Tile key={name}>
                    <TileHead><span>{name}</span><span>0%</span></TileHead>
                    <TileBody $iconWidth={iconWidth}>{icon}<span>0</span></TileBody>
                    <TileFoot>View more...</TileFoot>
                  </Tile>
                ))}
              </Tiles>
              <Panels>
                <Panel>
                  <PanelHead><FaGlobe />World Map</PanelHead>
                  <WorldMap />
                  <MapControls><MapButton>+</MapButton><MapButton>−</MapButton></MapControls>
                </Panel>
                <Panel>
                  <PanelHead><FaChartBar />Sales Analytics</PanelHead>
                  <SalesChart />
                </Panel>
              </Panels>
            </Main>
          </SiteBody>
        </Site>
        <Scrollbar><ArrowUp /><Thumb /><ArrowDown /></Scrollbar>
      </Page>

      <Taskbar>
        <Start><svg width="16" height="16" viewBox="0 0 16 16" fill="#fff"><path d="M0 2.200L6.500 1.300V7.600H0zM7.300 1.200L16 0V7.600H7.300zM0 8.400H6.500V14.700L0 13.800zM7.300 8.400H16V16L7.300 14.800z" /></svg></Start>
        <Search>
          <svg width="17" height="17" fill="none" stroke="#e6e6e6" strokeWidth="1.200"><circle cx="10.500" cy="6" r="5" /><path d="M7 9.700L.7 16" /></svg>
          Type here to search
        </Search>
        <Apps>{apps.map(([icon, state], i) => <TaskApp key={i} $state={state}>{icon}</TaskApp>)}</Apps>
        <Weather>
          <svg width="24" height="24" viewBox="0 0 24 24"><path d="M15 1.500Q22 6 21.500 13A9.500 9.500 0 0 1 3 17.500Q11 18 13.500 11.500 15 7 15 1.500z" fill="#f5a02c" /><path d="M5 5.500h8M14 5.500h5M3 9.500h15M1 13.500h14M4 17.500h14" stroke="#f6d583" strokeWidth="1.700" /></svg>
          19°C
        </Weather>
        <Chevron><svg width="12" height="8" fill="none" stroke="#fff" strokeWidth="1.200"><path d="M.7 7L6 1.500 11.300 7" /></svg></Chevron>
        <Tray>
          <BluetoothTile><FaBluetoothB /></BluetoothTile>
          <svg width="14" height="14" fill="none" stroke="#ddd" strokeWidth="1.100"><path d="M1 12A11 11 0 0 1 12 2M4 12.500A8 8 0 0 1 12.500 5M7 12.800A5.500 5.500 0 0 1 13 8" /><circle cx="11.500" cy="11.500" r="1" fill="#fff" /></svg>
          <FaSlack size={14} /><Vlc s={16} />
          <svg width="14" height="18" fill="none" stroke="#fff" strokeWidth="1.100"><path d="M4 6V1.500h6V6M2.500 6h9v6M2.500 6v8.500q0 2 2 2h3M8 14l2.500 2.500L14 12M6 3.500h.6M8 3.500h.6" /></svg>
          <svg width="16" height="17" viewBox="0 0 16 17"><path d="M0 11l8-4 8 3-8 6z" fill="#1f86e8" /><path d="M0 9.500l8-4 8 3-8 5z" fill="#e8312d" /><path d="M0 7.500l8-4 8 3-8 5z" fill="#f7c71e" /><path d="M0 5l8-4.500 8 3.500-8 5.500z" fill="#4cc14a" /><ellipse cx="8.500" cy="4.800" rx="3" ry="2.200" fill="#1f3c2b" /></svg>
          <svg width="17" height="14" fill="none" stroke="#fff" strokeWidth="1.100"><path d="M1 5h2.500L7 2v10L3.500 9H1zM9 5q1.500 2 0 4M11 3.200q3 3.800 0 7.600M13.500 1.500q4.500 5.500 0 11" /></svg>
        </Tray>
        <Clock>3:42 AM<br />Friday<br />10/20/2023</Clock>
        <Notice>
          <svg width="16" height="16"><path d="M0 0h16v12H8l-3 3v-3H0z" fill="#fff" /><path d="M3 3.500h10M3 6h10M3 8.500h7" stroke="#101010" /></svg>
          <Badge>1</Badge>
        </Notice>
        <ShowDesktop />
      </Taskbar>

      <Notepad>
        <NoteTitle>
          <NotepadIcon /><NoteName>*Untitled - Notepad</NoteName>
          <NoteButtons>
            <svg width="12" height="12" stroke="#000"><path d="M1 6.500h10" /></svg>
            <svg width="12" height="12" stroke="#000" fill="none"><path d="M1.500 1.500h9v9h-9z" /></svg>
            <svg width="12" height="12" stroke="#000" fill="none"><path d="M1 1l10 10M11 1L1 11" /></svg>
          </NoteButtons>
        </NoteTitle>
        <NoteMenu><MenuItem $w={32}>File</MenuItem><MenuItem $w={34}>Edit</MenuItem><MenuItem $w={52}>Format</MenuItem><MenuItem $w={39}>View</MenuItem><MenuItem $w={40}>Help</MenuItem></NoteMenu>
        <NoteBody>
          <NoteText>{`*so what happnes we send teh requet to server and it will
send back the htm file

admin credentials ->
username ->admin
password ->1234`}</NoteText>
          <NoteScroll>
            <svg width="8" height="6" fill="none" stroke="#bbb" strokeWidth="1.800"><path d="M.5 5L4 1.500 7.500 5" /></svg>
            <svg width="8" height="6" fill="none" stroke="#bbb" strokeWidth="1.800"><path d="M.5 1L4 4.500 7.500 1" /></svg>
          </NoteScroll>
        </NoteBody>
      </Notepad>
    </Desktop>
  );
}
